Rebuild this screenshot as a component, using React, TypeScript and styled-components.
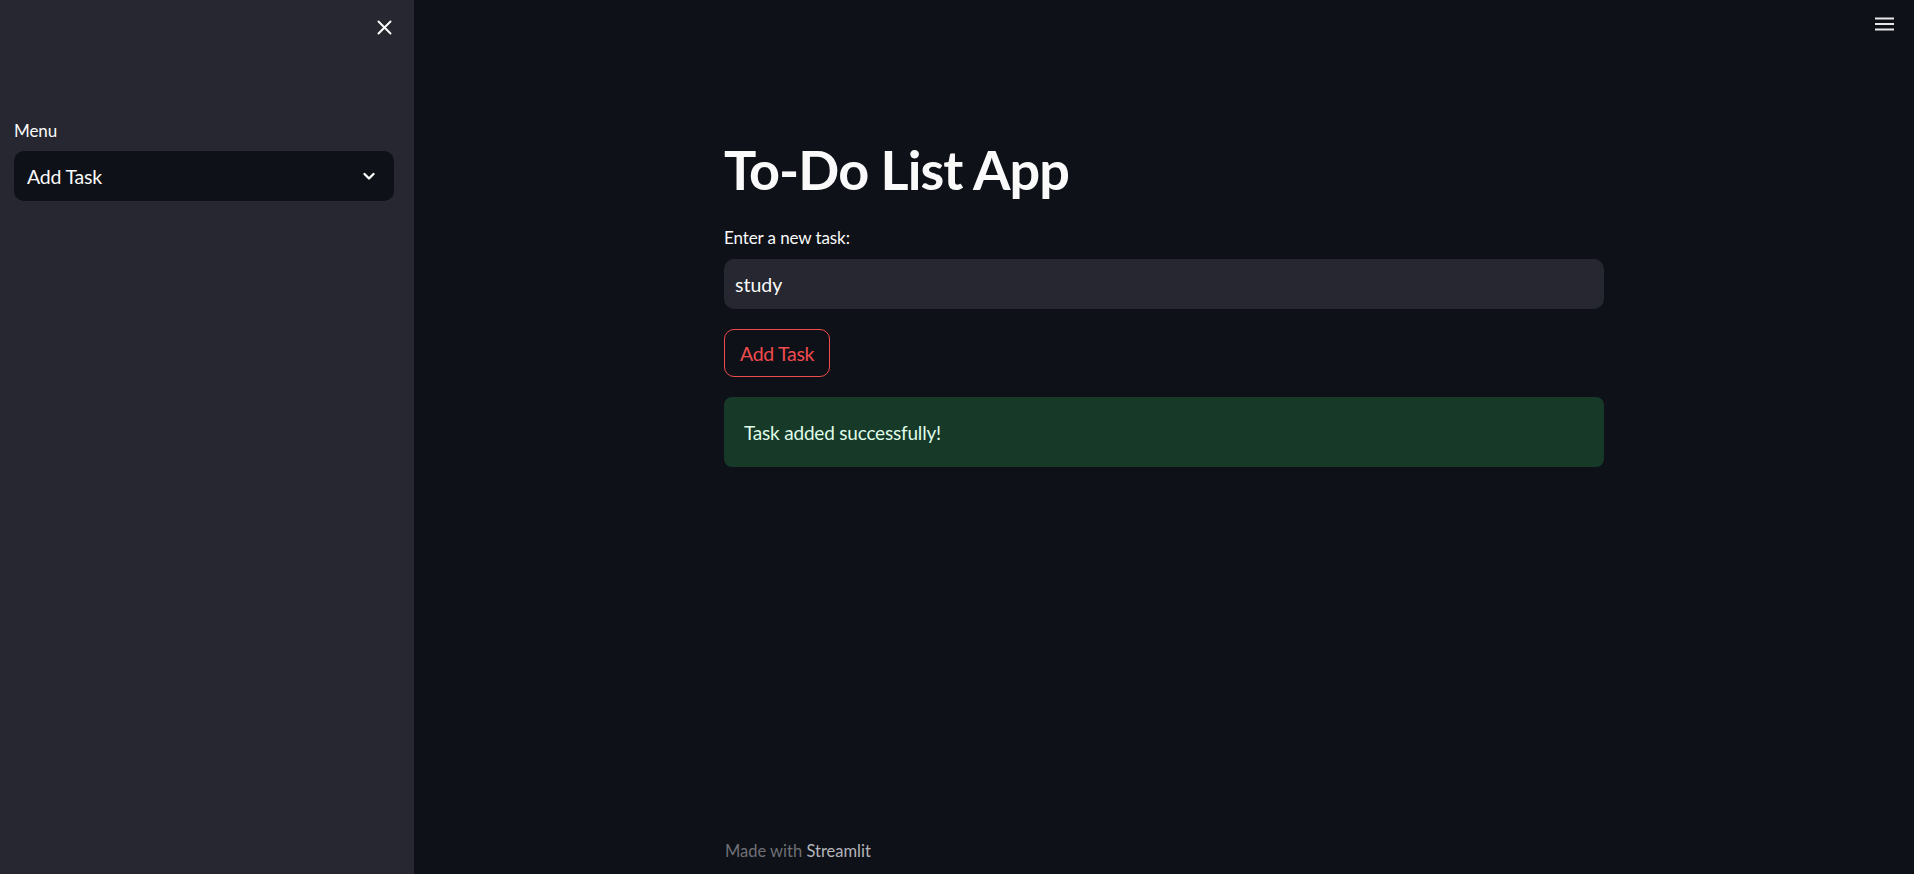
import React from "react";
import styled, { createGlobalStyle } from "styled-components";

const GlobalStyle = createGlobalStyle`
    html, body {
        margin: 0;
        padding: 0;
        background: #0e1117;
        color: #fafafa;
        font-family: "Source Sans Pro", Lato, "Noto Sans", sans-serif;
    }
    * {
        box-sizing: border-box;
    }
`

const Layout = styled.div`
    display: flex;
    height: 100vh;
    overflow: hidden;
`

/* Sidebar */
const Sidebar = styled.aside`
    width: 414px;
    flex-shrink: 0;
    background: #262730;
    padding: 0 20px 0 14px;
    display: flex;
    flex-direction: column;
`
const SidebarHeader = styled.div`
    display: flex;
    justify-content: flex-end;
    padding: 13px 0 0;
    margin-right: -4px;
    height: 119px;
`
const IconButton = styled.button`
    width: 28px;
    height: 28px;
    padding: 0;
    border: none;
    background: transparent;
    color: #fafafa;
    display: flex;
    align-items: center;
    justify-content: center;
    cursor: pointer;
`
const FieldLabel = styled.label<{ gap?: number }>`
    display: block;
    font-size: 17px;
    line-height: 24px;
    height: 24px;
    letter-spacing: -0.1px;
    margin-bottom: ${(p) => p.gap ?? 8}px;
    color: #fafafa;
`
const SelectBox = styled.div`
    height: 50px;
    border-radius: 10px;
    background: #0e1117;
    display: flex;
    align-items: center;
    justify-content: space-between;
    padding: 0 18px 0 13px;
    font-size: 19.5px;
    letter-spacing: -0.2px;
    color: #fafafa;
`

/* Main */
const Main = styled.main`
    flex: 1;
    display: flex;
    flex-direction: column;
    min-width: 0;
`
const TopBar = styled.header`
    height: 60px;
    display: flex;
    justify-content: flex-end;
    align-items: flex-start;
    padding: 17px 20px 0 0;
`
const Content = styled.section`
    width: 920px;
    margin: 0 auto;
    padding: 0 20px;
    display: flex;
    flex-direction: column;
`
const Title = styled.h1`
    margin: 77px 0 24px;
    font-size: 54px;
    line-height: 65px;
    font-weight: 700;
    letter-spacing: -0.9px;
    color: #fafafa;
`
const TextInput = styled.div`
    height: 50px;
    border-radius: 10px;
    background: #262730;
    display: flex;
    align-items: center;
    padding: 0 11px;
    font-size: 19.5px;
    color: #fafafa;
    margin-bottom: 20px;
`
const Button = styled.button`
    align-self: flex-start;
    height: 48px;
    padding: 0 15px;
    border-radius: 10px;
    border: 1px solid #f04b4f;
    background: transparent;
    color: #f04b4f;
    font-family: inherit;
    font-size: 19.5px;
    letter-spacing: -0.3px;
    margin-bottom: 20px;
    cursor: pointer;
`
const Alert = styled.div`
    height: 70px;
    border-radius: 8px;
    background: #173928;
    color: #dffde9;
    display: flex;
    align-items: center;
    padding: 0 20px;
    font-size: 19px;
    letter-spacing: -0.2px;
`
const Footer = styled.footer`
    margin-top: auto;
    width: 920px;
    margin-left: auto;
    margin-right: auto;
    padding: 0 21px 11px;
    font-size: 16.5px;
    line-height: 24px;
    color: #6f7076;
`
const FooterLink = styled.span`
    color: #b4b5ba;
`

const CloseIcon = () => (
    <svg width="15" height="15" viewBox="0 0 15 15" fill="none" stroke="currentColor" strokeWidth="2" strokeLinecap="round">
        <path d="M1.5 1.5l12 12M13.5 1.5l-12 12" />
    </svg>
)

const ChevronIcon = () => (
    <svg width="14" height="10" viewBox="0 0 14 10" fill="none" stroke="currentColor" strokeWidth="2.4" strokeLinecap="round" strokeLinejoin="round">
        <path d="M2.5 3l4.5 4.5L11.5 3" />
    </svg>
)

const MenuIcon = () => (
    <svg width="19" height="14" viewBox="0 0 19 14" fill="none" stroke="#e8e8ea" strokeWidth="2">
        <path d="M0 1.5h19M0 7h19M0 12.5h19" />
    </svg>
)

export default function App() {
    return (
        <>
            <GlobalStyle />
            <Layout>
                <Sidebar>
                    <SidebarHeader>
                        <IconButton aria-label="Close sidebar">
                            <CloseIcon />
                        </IconButton>
                    </SidebarHeader>
                    <FieldLabel>Menu</FieldLabel>
                    <SelectBox>
                        <span>Add Task</span>
                        <ChevronIcon />
                    </SelectBox>
                </Sidebar>
                <Main>
                    <TopBar>
                        <MenuIcon />
                    </TopBar>
                    <Content>
                        <Title>To-Do List App</Title>
                        <FieldLabel gap={9}>Enter a new task:</FieldLabel>
                        <TextInput>study</TextInput>
                        <Button>Add Task</Button>
                        <Alert>Task added successfully!</Alert>
                    </Content>
                    <Footer>
                        Made with <FooterLink>Streamlit</FooterLink>
                    </Footer>
                </Main>
            </Layout>
        </>
    );
}
